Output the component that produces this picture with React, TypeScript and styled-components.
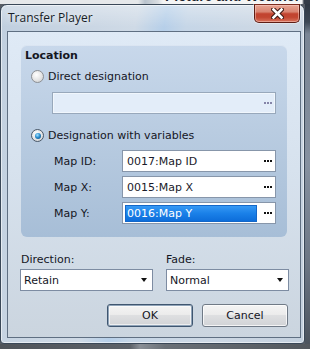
import React from "react";
import styled, { createGlobalStyle, css } from "styled-components";

const Global = createGlobalStyle`
  html, body { margin: 0; padding: 0; }
  body { width: 310px; height: 349px; overflow: hidden; background: #585e66; }
  * { box-sizing: border-box; }
`;

const Screen = styled.div`
  width: 310px;
  height: 349px;
  display: flex;
  flex-direction: column;
  overflow: hidden;
  background: #585e66;
`;

const TopStrip = styled.div`
  height: 4px;
  flex: none;
  overflow: hidden;
  display: flex;
  background: linear-gradient(90deg, #e6e8ea 0, #e6e8ea 138px, #b9c3cd 145px, #d9dde1 158px, #f4f4f4 163px, #f4f4f4 302px, #343c47 304px);
`;

const BackTitle = styled.div`
  margin-left: 165px;
  margin-top: -12px;
  font: bold 14px "Liberation Sans", Arial, sans-serif;
  line-height: 16px;
  color: #1b2430;
  white-space: nowrap;
`;

const Middle = styled.div`
  display: flex;
  height: 340px;
  flex: none;
`;

const RightStrip = styled.div`
  flex: 1;
  background: linear-gradient(180deg, #2f3843 0, #3d4754 18px, #7a8594 30px, #8691a0 160px, #6c7684 260px, #4c545e 340px);
`;

const BottomStrip = styled.div`
  flex: 1;
  background: linear-gradient(90deg, #4f545a 0, #5d6269 130px, #8a8f96 140px, #6a7077 165px, #52575d 310px);
`;

const Window = styled.div`
  width: 305px;
  height: 340px;
  flex: none;
  display: flex;
  flex-direction: column;
  border: 1px solid #3a4858;
  border-radius: 7px 7px 4px 4px;
  background:
    linear-gradient(180deg, rgba(255, 255, 255, 0.35) 0, rgba(255, 255, 255, 0) 22px),
    linear-gradient(100deg, #c0cfdf 0%, #cfdae6 38%, #b6cfe9 46%, #c6d6e7 52%, #cdd8e4 75%, #c3d0de 100%);
  box-shadow: inset 0 0 0 1px rgba(255, 255, 255, 0.55);
`;

const TitleBar = styled.div`
  height: 26px;
  flex: none;
  display: flex;
  align-items: flex-start;
  padding: 0 4px 0 7px;
`;

const TitleText = styled.div`
  flex: 1;
  margin-top: 5px;
  font: 12px "Open Sans", "Liberation Sans", sans-serif;
  line-height: 15px;
  color: #161c26;
  text-shadow: 0 0 6px rgba(255, 255, 255, 0.9);
`;

const CloseButton = styled.div`
  width: 46px;
  height: 19px;
  margin-top: -1px;
  display: flex;
  align-items: center;
  justify-content: center;
  border: 1px solid #5e1d14;
  border-top-color: #7a2a1e;
  border-radius: 0 0 5px 5px;
  background: linear-gradient(180deg, #e7a393 0%, #d98572 40%, #c2432f 52%, #c24631 72%, #d9735c 100%);
  box-shadow: inset 0 0 0 1px rgba(255, 220, 210, 0.45), 0 0 0 1px rgba(255, 255, 255, 0.35);
`;

const ClientFrame = styled.div`
  margin: 0 3px 0 6px;
  border: 1px solid #5f6f82;
  height: 307px;
  flex: none;
`;

const Client = styled.div`
  height: 305px;
  padding: 13px 13px 0 13px;
  display: flex;
  flex-direction: column;
  background: linear-gradient(180deg, #dfeaf6 0%, #d7e2ee 45%, #cbd5df 100%);
  font: 11px "DejaVu Sans", Verdana, sans-serif;
  color: #15161f;
`;

const GroupBox = styled.div`
  height: 192px;
  flex: none;
  display: flex;
  flex-direction: column;
  padding: 4px 11px 13px 4px;
  border-radius: 6px;
  background: linear-gradient(180deg, #c8d8eb 0%, #b9cce1 45%, #a7bed7 100%);
  box-shadow: inset 0 1px 0 rgba(255, 255, 255, 0.35);
`;

const Legend = styled.div`
  font-weight: bold;
  line-height: 13px;
  height: 13px;
`;

const RadioRow = styled.div<{ $gap: number }>`
  display: flex;
  align-items: center;
  gap: 4px;
  height: 13px;
  line-height: 13px;
  margin-top: ${(p) => p.$gap}px;
  padding-left: 6px;
`;

const Radio = styled.span<{ $checked?: boolean }>`
  width: 13px;
  height: 13px;
  flex: none;
  border-radius: 50%;
  display: flex;
  align-items: center;
  justify-content: center;
  border: 1px solid ${(p) => (p.$checked ? "#4a5868" : "#8c8f93")};
  background: radial-gradient(circle at 40% 35%, #ffffff 0%, #e4e4e4 55%, #c5c7c9 100%);
  &::after {
    content: "";
    display: ${(p) => (p.$checked ? "block" : "none")};
    width: 6px;
    height: 6px;
    border-radius: 50%;
    background: radial-gradient(circle at 40% 35%, #a9e4ff 0%, #2b8fd0 45%, #0d3f6e 100%);
  }
`;

const DisabledField = styled.div`
  height: 22px;
  width: 224px;
  flex: none;
  margin: 9px 0 0 27px;
  display: flex;
  justify-content: flex-end;
  align-items: center;
  padding-right: 3px;
  border: 1px solid #98a8bb;
  background: #e3edf9;
  box-shadow: inset 0 0 0 1px #f0f6fc;
`;

const Dots = styled.span<{ $muted?: boolean }>`
  display: flex;
  gap: 1px;
  width: 8px;
  & > i {
    width: 2px;
    height: 2px;
    background: ${(p) => (p.$muted ? "#8585a8" : "#111")};
    display: block;
  }
`;

const MapRows = styled.div`
  display: flex;
  flex-direction: column;
  gap: 4px;
  margin-top: 8px;
`;

const MapRow = styled.div`
  display: flex;
  align-items: center;
  height: 22px;
  padding-left: 29px;
`;

const MapLabel = styled.div`
  width: 68px;
  flex: none;
`;

const Field = styled.div`
  width: 154px;
  height: 22px;
  flex: none;
  display: flex;
  border: 1px solid #8796aa;
  background: #fff;
`;

const FieldText = styled.div<{ $selected?: boolean }>`
  flex: 1;
  display: flex;
  align-items: center;
  margin: 2px 0 1px 2px;
  padding-left: 2px;
  white-space: nowrap;
  color: #1a1a2a;
  ${(p) =>
    p.$selected &&
    css`
      color: #fff;
      background: linear-gradient(180deg, #3a9cf6 0%, #1a80e8 50%, #0b6bd8 100%);
      box-shadow: inset 0 0 0 1px #1467c8;
    `}
`;

const FieldButton = styled.div`
  width: 18px;
  flex: none;
  display: flex;
  align-items: center;
  padding-left: 7px;
`;

const Options = styled.div`
  margin: 16px -2px 0 -1px;
  display: grid;
  grid-template-columns: 133px 123px;
  column-gap: 13px;
`;

const OptionLabel = styled.div<{ $indent?: number }>`
  line-height: 13px;
  height: 13px;
  padding-left: ${(p) => p.$indent ?? 0}px;
`;

const Select = styled.div`
  margin-top: 3px;
  height: 22px;
  display: flex;
  align-items: center;
  justify-content: space-between;
  padding: 0 5px 0 3px;
  border: 1px solid #7d8ca2;
  background: #fff;
`;

const Arrow = styled.span`
  width: 0;
  height: 0;
  border-left: 3.5px solid transparent;
  border-right: 3.5px solid transparent;
  border-top: 4px solid #111;
`;

const Buttons = styled.div`
  margin: 13px -1px 0 0;
  display: flex;
  justify-content: flex-end;
  gap: 9px;
`;

const Button = styled.div<{ $default?: boolean }>`
  width: 86px;
  height: 23px;
  display: flex;
  align-items: center;
  justify-content: center;
  border-radius: 3px;
  border: 1px solid ${(p) => (p.$default ? "#3f5670" : "#707a86")};
  background: linear-gradient(180deg, #f4f4f4 0%, #ececec 45%, #dedfe1 50%, #d1d3d6 100%);
  box-shadow: ${(p) =>
    p.$default
      ? "inset 0 0 0 1px #8fa3b8, inset 0 0 0 2px rgba(255,255,255,0.6)"
      : "inset 0 0 0 1px rgba(255,255,255,0.75)"};
  color: #15161f;
`;

const CloseIcon = () => (
  <svg width="13" height="11" viewBox="0 0 13 11">
    <path d="M2.5 1.5 L10.5 9.5 M10.5 1.5 L2.5 9.5" stroke="#3a1510" strokeWidth="4.6" strokeLinecap="square" fill="none" />
    <path d="M2.5 1.5 L10.5 9.5 M10.5 1.5 L2.5 9.5" stroke="#ffffff" strokeWidth="2.6" strokeLinecap="square" fill="none" />
  </svg>
);

const ThreeDots = ({ muted }: { muted?: boolean }) => (
  <Dots $muted={muted}>
    <i />
    <i />
    <i />
  </Dots>
);

const rows = [
  { label: "Map ID:", value: "0017:Map ID", selected: false },
  { label: "Map X:", value: "0015:Map X", selected: false },
  { label: "Map Y:", value: "0016:Map Y", selected: true },
];

export default function App() {
  return (
    <>
      <Global />
      <Screen>
        <TopStrip>
          <BackTitle>Picture and Weather</BackTitle>
        </TopStrip>
        <Middle>
          <Window>
            <TitleBar>
              <TitleText>Transfer Player</TitleText>
              <CloseButton>
                <CloseIcon />
              </CloseButton>
            </TitleBar>
            <ClientFrame>
              <Client>
                <GroupBox>
                  <Legend>Location</Legend>
                  <RadioRow $gap={8}>
                    <Radio />
                    <span>Direct designation</span>
                  </RadioRow>
                  <DisabledField>
                    <ThreeDots muted />
                  </DisabledField>
                  <RadioRow $gap={15}>
                    <Radio $checked />
                    <span>Designation with variables</span>
                  </RadioRow>
                  <MapRows>
                    {rows.map((r) => (
                      <MapRow key={r.label}>
                        <MapLabel>{r.label}</MapLabel>
                        <Field>
                          <FieldText $selected={r.selected}>{r.value}</FieldText>
                          <FieldButton>
                            <ThreeDots />
                          </FieldButton>
                        </Field>
                      </MapRow>
                    ))}
                  </MapRows>
                </GroupBox>
                <Options>
                  <div>
                    <OptionLabel $indent={1}>Direction:</OptionLabel>
                    <Select>
                      <span>Retain</span>
                      <Arrow />
                    </Select>
                  </div>
                  <div>
                    <OptionLabel>Fade:</OptionLabel>
                    <Select>
                      <span>Normal</span>
                      <Arrow />
                    </Select>
                  </div>
                </Options>
                <Buttons>
                  <Button $default>OK</Button>
                  <Button>Cancel</Button>
                </Buttons>
              </Client>
            </ClientFrame>
          </Window>
          <RightStrip />
        </Middle>
        <BottomStrip />
      </Screen>
    </>
  );
}
